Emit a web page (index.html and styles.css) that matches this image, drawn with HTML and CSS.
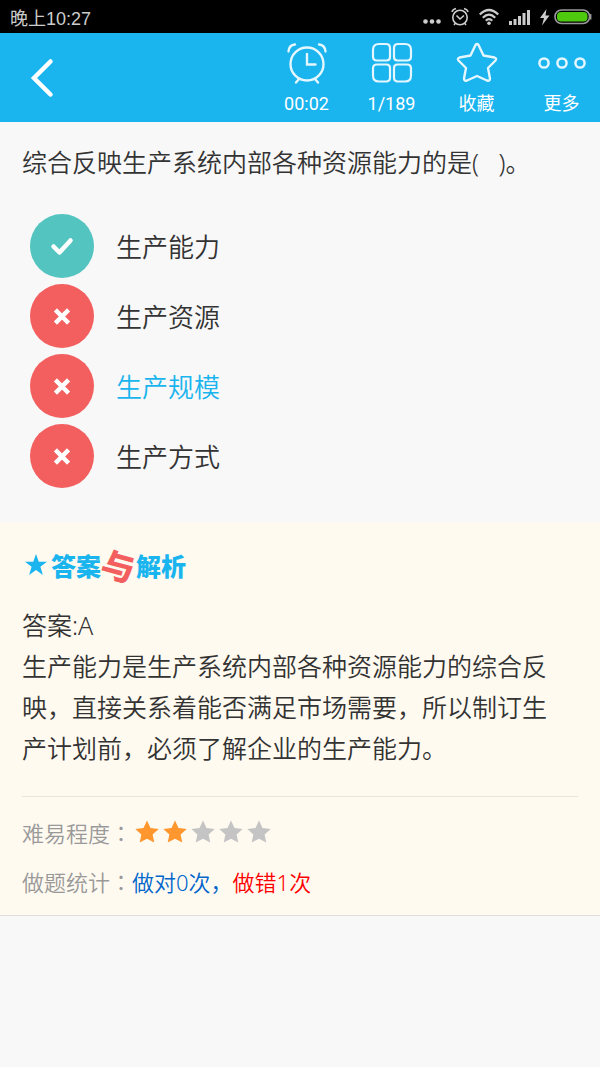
FILE: index.html
```html
<!DOCTYPE html>
<html lang="zh-CN">
<head>
    <meta charset="UTF-8">
    <meta name="viewport" content="width=device-width, initial-scale=1.0">
    <title>答题</title>
    <link rel="stylesheet" href="styles.css">
</head>
<body>
    <svg class="defs" width="0" height="0" aria-hidden="true">
        <symbol id="star" viewBox="0 0 24 24">
            <path d="M12 .5l3.500 7.500 8.200.9-6.100 5.500 1.700 8.100L12 18.800 4.700 22.500l1.700-8.100L.3 8.900 8.500 8z"/>
        </symbol>
        <symbol id="check" viewBox="0 0 64 64">
            <path d="M23.500 32.500l6 6 11-12" fill="none" stroke="#fff" stroke-width="4.500" stroke-linecap="round" stroke-linejoin="round"/>
        </symbol>
        <symbol id="cross" viewBox="0 0 64 64">
            <path d="M27 27.500l10 10M37 27.500l-10 10" fill="none" stroke="#fff" stroke-width="4.500" stroke-linecap="square"/>
        </symbol>
    </svg>

    <div class="status-bar">
        <span>晚上10:27</span>
        <div class="status-icons">
            <svg width="18" height="20" viewBox="0 0 18 20" fill="#ccc">
                <circle cx="2.500" cy="14.500" r="2.300"/>
                <circle cx="9" cy="14.500" r="2.300"/>
                <circle cx="15.500" cy="14.500" r="2.300"/>
            </svg>
            <svg width="18" height="20" viewBox="0 0 18 20" fill="none" stroke="#ccc" stroke-width="1.600">
                <circle cx="9" cy="10.500" r="7.200"/>
                <path d="M5.500 8.500L9 12l4-3.500M.8 4.800Q2 2.200 5 1.500M17.200 4.800Q16 2.200 13 1.500M4.500 16l-1.500 2M13.500 16l1.500 2"/>
            </svg>
            <svg width="20" height="20" viewBox="0 0 20 20" fill="none" stroke="#ccc" stroke-width="2.200">
                <path d="M.8 7.500Q10-1.500 19.200 7.500M3.800 10.800Q10 4.500 16.200 10.800M6.800 13.800Q10 10.500 13.200 13.800"/>
                <circle cx="10" cy="16.200" r="1.800" fill="#ccc" stroke="none"/>
            </svg>
            <svg width="21" height="20" viewBox="0 0 21 20" fill="#ccc">
                <path d="M0 14h3v4H0zM4.500 12h3v6h-3zM9 9h3v9H9zM13.500 6h3v12h-3zM18 3h3v15h-3z"/>
            </svg>
            <svg width="10" height="20" viewBox="0 0 10 20" fill="#ccc">
                <path d="M6.500 2L0 11h4l-2 7.500L9.500 8.500H5.500z"/>
            </svg>
            <svg class="battery" width="38" height="20" viewBox="0 0 38 20">
                <rect x="1" y="3" width="34.500" height="13.500" rx="6.500" fill="none" stroke="#999" stroke-width="1.600"/>
                <path d="M36.500 7v5.500" stroke="#999" stroke-width="1.800"/>
                <rect x="3" y="5" width="30.500" height="9.500" rx="4" fill="#4fc90d"/>
            </svg>
        </div>
    </div>

    <header class="toolbar">
        <button class="back" type="button" aria-label="返回">
            <svg width="24" height="40" viewBox="0 0 24 40" fill="none" stroke="#fff" stroke-width="4.500" stroke-linecap="round">
                <path d="M20.500 3.500L4 20l16.500 16.500"/>
            </svg>
        </button>
        <div class="tools">
            <button class="tool" type="button">
                <svg width="42" height="42" viewBox="0 0 42 42" fill="none" stroke="#e4f6fe" stroke-width="2.400" stroke-linecap="round">
                    <circle cx="21" cy="22" r="16.500"/>
                    <path d="M21 12v10.500h8.500M2.500 9.500Q3 3 9 2.500M39.500 9.500Q39 3 33 2.500M13 37l-3 3.500M29 37l3 3.500"/>
                </svg>
                <span>00:02</span>
            </button>
            <button class="tool" type="button">
                <svg width="42" height="42" viewBox="0 0 42 42" fill="none" stroke="#e4f6fe" stroke-width="2.200">
                    <path d="M8 2h7q4 0 4 4v9q0 3.500-3.500 3.500H6q-4 0-4-4V8q0-6 6-6zM27 2h7q6 0 6 6v6.500q0 4-4 4h-9.500q-3.500 0-3.500-3.500V6q0-4 4-4zM6 22.500h9.500q3.500 0 3.500 3.500v9.500q0 4-4 4H8q-6 0-6-6v-7q0-4 4-4zM26.500 22.500H36q4 0 4 4v7q0 6-6 6h-7q-4 0-4-4V26q0-3.500 3.500-3.500z"/>
                </svg>
                <span>1/189</span>
            </button>
            <button class="tool" type="button">
                <svg width="42" height="42" viewBox="0 0 42 42" fill="none" stroke="#e4f6fe" stroke-width="2.400" stroke-linejoin="round">
                    <path d="M19.500 3Q21 1 22.500 3L27.500 13.500 38.500 15.500Q41 16.500 39.500 18.500L32 26 34 36.500Q34 39.500 31 38.500L21 34 11 38.500Q8 39.500 8 36.500L10 26 2.500 18.500Q1 16.500 3.500 15.500L14.500 13.500z"/>
                </svg>
                <span>收藏</span>
            </button>
            <button class="tool" type="button">
                <svg width="48" height="42" viewBox="0 0 48 42" fill="none" stroke="#e4f6fe" stroke-width="2.500">
                    <circle cx="6" cy="21" r="4.600"/>
                    <circle cx="24" cy="21" r="4.600"/>
                    <circle cx="42" cy="21" r="4.600"/>
                </svg>
                <span>更多</span>
            </button>
        </div>
    </header>

    <main>
        <section class="question">
            <p class="question-text">综合反映生产系统内部各种资源能力的是(&nbsp;&nbsp;&nbsp;)。</p>
            <ul class="options">
                <li><button class="option right" type="button"><svg class="mark"><use href="#check"/></svg>生产能力</button></li>
                <li><button class="option" type="button"><svg class="mark"><use href="#cross"/></svg>生产资源</button></li>
                <li><button class="option chosen" type="button"><svg class="mark"><use href="#cross"/></svg>生产规模</button></li>
                <li><button class="option" type="button"><svg class="mark"><use href="#cross"/></svg>生产方式</button></li>
            </ul>
        </section>

        <section class="analysis">
            <h2 class="analysis-title">
                <svg class="title-star" viewBox="0 0 24 24"><path d="M12 0l3 8.500h9l-7.200 5.400L19.500 23 12 17.500 4.500 23l2.700-9.100L0 8.500h9z"/></svg>
                <span>答案</span><span class="and">与</span><span>解析</span>
            </h2>
            <p class="analysis-text">答案:A<br>生产能力是生产系统内部各种资源能力的综合反映，直接关系着能否满足市场需要，所以制订生产计划前，必须了解企业的生产能力。</p>
            <div class="stats">
                <div class="row">
                    <span>难易程度<span class="colon" lang="ja">：</span></span>
                    <span class="stars">
                        <svg class="on"><use href="#star"/></svg>
                        <svg class="on"><use href="#star"/></svg>
                        <svg><use href="#star"/></svg>
                        <svg><use href="#star"/></svg>
                        <svg><use href="#star"/></svg>
                    </span>
                </div>
                <div class="row">
                    <span>做题统计<span class="colon" lang="ja">：</span></span>
                    <span class="count-right">做对0次，</span>
                    <span class="count-wrong">做错1次</span>
                </div>
            </div>
        </section>
    </main>
</body>
</html>
```
FILE: styles.css
```css
* {
    box-sizing: border-box;
}

body {
    margin: 0;
    font-family: "Noto Sans", "Noto Sans CJK SC", sans-serif;
    font-weight: 350;
    background: #f8f8f8;
    color: #333;
}

button {
    margin: 0;
    padding: 0;
    border: none;
    background: none;
    font-family: inherit;
    font-weight: inherit;
    color: inherit;
    cursor: pointer;
}

.defs {
    position: absolute;
}

.status-bar {
    display: flex;
    align-items: center;
    justify-content: space-between;
    height: 33px;
    padding: 0 8px 0 10px;
    background: #000;
    color: #ccc;
    font-family: "Liberation Sans", "Noto Sans CJK SC", sans-serif;
    font-size: 18px;
    font-weight: 400;
}

.status-icons {
    display: flex;
    gap: 10px;
}

.status-icons .battery {
    margin-left: -6px;
}

.toolbar {
    display: flex;
    align-items: center;
    justify-content: space-between;
    background: #1ab4ee;
    color: #fff;
}

.back {
    padding: 0 30px;
}

.back svg {
    display: block;
}

.tools {
    display: flex;
    gap: 8px;
    padding: 9px 0 6px;
}

.tool {
    display: flex;
    flex-direction: column;
    align-items: center;
    gap: 8px;
    width: 77px;
    font-family: Roboto, "Noto Sans CJK SC", sans-serif;
    font-size: 18px;
    font-weight: 400;
    line-height: 24px;
}

.question {
    padding: 20px 22px 34px;
}

.question-text {
    margin: 0 0 31px;
    font-size: 25px;
    line-height: 41px;
}

.options {
    display: flex;
    flex-direction: column;
    gap: 6px;
    margin: 0;
    padding: 0 8px;
    list-style: none;
}

.option {
    display: flex;
    align-items: center;
    gap: 22px;
    width: 100%;
    font-size: 26px;
}

.option.chosen {
    color: #1ab4ee;
}

.mark {
    width: 64px;
    height: 64px;
    border-radius: 50%;
    background: #f35e5e;
}

.right .mark {
    background: #54c4c0;
}

.analysis {
    padding: 22px 22px 10px;
    background: #fffaf0;
    border-bottom: 1px solid #ddd;
}

.analysis-title {
    display: flex;
    align-items: center;
    height: 42px;
    margin: 0 0 19px;
    padding-left: 3px;
    color: #1ab4ee;
    font-size: 25px;
    font-weight: 900;
}

.title-star {
    width: 22px;
    height: 22px;
    margin-right: 4px;
    fill: #1ab4ee;
}

.and {
    margin: 0 1px;
    color: #f35e5e;
    font-size: 33px;
    transform: rotate(15deg);
}

.analysis-text {
    margin: 0;
    padding: 0 22px 27px 0;
    font-size: 25px;
    line-height: 41px;
}

.stats {
    padding-top: 10px;
    border-top: 1px solid #e8e5dc;
    color: #999;
    font-size: 22px;
}

.row {
    display: flex;
    align-items: center;
    height: 49px;
}

/* full-width colon sits in the middle of its cell */
.colon {
    font-family: "Noto Sans CJK JP", sans-serif;
}

.stars {
    display: flex;
    gap: 4px;
    padding-left: 3px;
}

.stars svg {
    width: 24px;
    height: 24px;
    fill: #c4c4c4;
}

.stars .on {
    fill: #ff962e;
}

.count-right {
    color: #06c;
}

.count-wrong {
    color: #f00;
}
```
